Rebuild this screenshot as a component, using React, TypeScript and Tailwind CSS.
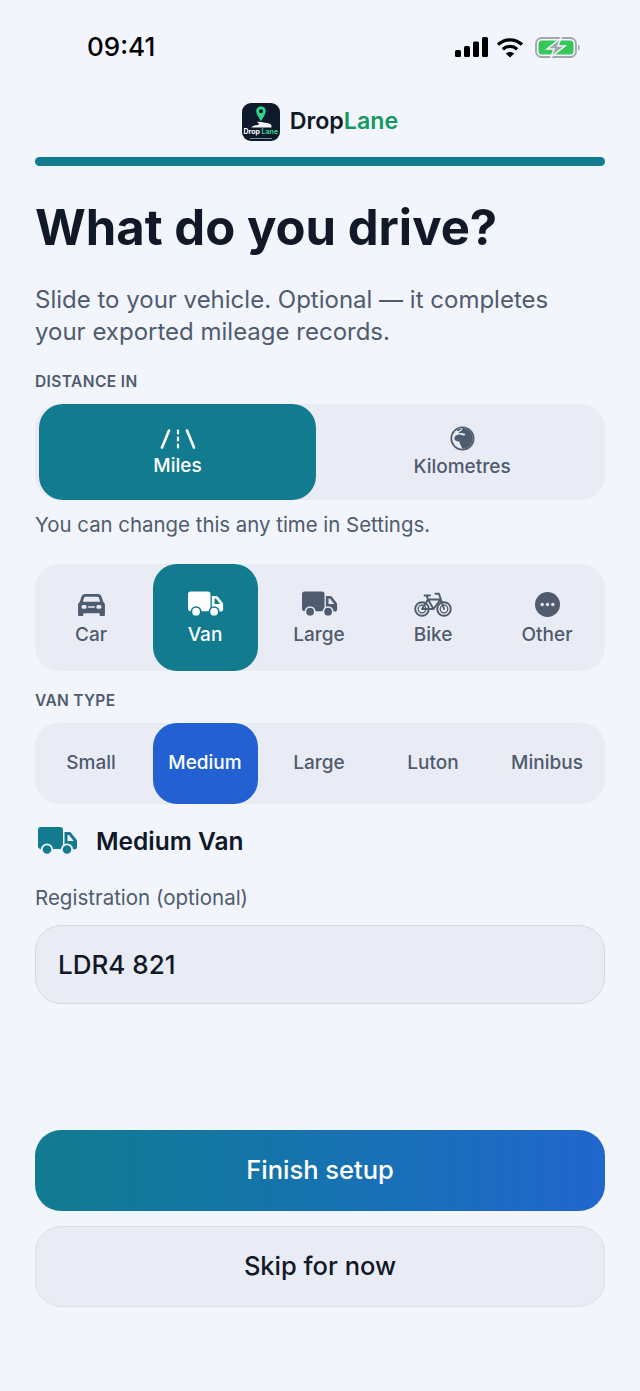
const Truck = ({ className }: { className: string }) => (
  <svg viewBox="0 0 40 28" className={className} fill="currentColor">
    <rect x="0" y="0" width="25" height="22" rx="3" />
    <path
      fillRule="evenodd"
      d="M26.500 5H31c1 0 1.800.4 2.400 1.200l5 6.300c.4.500.6 1.100.6 1.700V20c0 1.400-1 2.300-2.300 2.300H26.500Zm3 3v6h6.200L31 8Z"
    />
    <circle cx="9" cy="22.500" r="5.200" stroke="var(--ring)" strokeWidth="1.800" />
    <circle cx="29" cy="22.500" r="5.200" stroke="var(--ring)" strokeWidth="1.800" />
  </svg>
);

const RoadIcon = () => (
  <svg viewBox="0 0 36 20" className="h-[20px] w-[36px]" stroke="currentColor" strokeLinecap="round" fill="none">
    <path d="M2 18.500 9 1.500M34 18.500 27 1.500" strokeWidth="2.600" />
    <path d="M18 1.500v3M18 8.500v3M18 15.500v3" strokeWidth="2.200" />
  </svg>
);

const GlobeIcon = () => (
  <svg viewBox="0 0 26 26" className="h-[25px] w-[25px]">
    <circle cx="13" cy="13" r="12.500" fill="currentColor" />
    <circle cx="13" cy="13" r="10.800" fill="#e9ecf4" />
    <path
      fillRule="evenodd"
      d="M13 2.200a10.800 10.800 0 0 1 10.800 10.800A10.800 10.800 0 0 1 13 23.800c-.8-1.400-1.600-3.300-2.400-4.700-.4-1.200-.4-2.400-1.400-3-1.500-.3-3.400-.4-4.300-1.800-.6-1.400-.2-3.200 1-4.200 1.700-1 3.300-1.400 5.100-1.100 1.500.4 3 1 4.400.7 1-.4.300-1.500-.7-1.800-1.800-.4-3.500-.8-5.400-.2-.8-1.300 1-2.300 2.400-2.600Z"
      fill="currentColor"
    />
    <path d="M7 4.500c1.500-1 3-1.700 5-1.800-.5 1.200-2 2.300-3.700 2.700Z" fill="currentColor" />
  </svg>
);

const CarIcon = () => (
  <svg viewBox="0 0 30 24" className="h-[23px] w-[29px]" fill="currentColor">
    <path
      fillRule="evenodd"
      d="M8.500 1h13c2 0 3.400 1 4 2.800l1.700 5.200c1.200.8 1.800 2 1.800 3.300V23a1 1 0 0 1-1 1h-3.500a1 1 0 0 1-1-1v-2H6.500v2a1 1 0 0 1-1 1H2a1 1 0 0 1-1-1V12.300c0-1.300.6-2.500 1.800-3.300l1.700-5.200C5.100 2 6.500 1 8.500 1Zm.2 3c-.8 0-1.300.4-1.500 1.100L6 9h18l-1.200-3.900c-.2-.7-.7-1.100-1.500-1.100ZM6.500 12.500a2 2 0 0 0 0 4h1.500a2 2 0 0 0 0-4Zm15.500 0a2 2 0 0 0 0 4h1.500a2 2 0 0 0 0-4Zm-10 1.200a.8.8 0 0 0 0 1.600h6a.8.8 0 0 0 0-1.600Z"
    />
  </svg>
);

const BikeIcon = () => (
  <svg viewBox="0 0 38 25" className="h-[25px] w-[38px]" fill="none" stroke="currentColor" strokeLinecap="round" strokeLinejoin="round">
    <circle cx="8" cy="17" r="6.800" strokeWidth="1.900" />
    <circle cx="30" cy="17" r="6.800" strokeWidth="1.900" />
    <circle cx="8" cy="17" r="3.800" strokeWidth="1.300" />
    <circle cx="30" cy="17" r="3.800" strokeWidth="1.300" />
    <path d="M8 17 14 7.500h12.500M14 7.500 19.500 17 26.500 7.500M8 17h11.500M30 17 25 1.800h-3.500M12.500 3.500 14 7.500M10.500 3.500h5.500" strokeWidth="1.900" />
  </svg>
);

const OtherIcon = () => (
  <svg viewBox="0 0 26 26" className="h-[25px] w-[25px]">
    <circle cx="13" cy="13" r="13" fill="currentColor" />
    <circle cx="7.500" cy="13" r="1.800" fill="#e9ecf4" />
    <circle cx="13" cy="13" r="1.800" fill="#e9ecf4" />
    <circle cx="18.500" cy="13" r="1.800" fill="#e9ecf4" />
  </svg>
);

const Logo = () => (
  <div className="relative h-[38px] w-[38px] overflow-hidden rounded-[9px] bg-[#0d1a2b]">
    <svg viewBox="0 0 38 38" className="absolute inset-0 h-full w-full">
      <path
        fillRule="evenodd"
        d="M19 3.500c-2.700 0-4.800 2.100-4.800 4.700 0 3.100 4.800 9.800 4.800 9.800s4.800-6.700 4.800-9.800c0-2.600-2.100-4.700-4.800-4.700Zm0 2.800a2 2 0 1 1 0 4 2 2 0 0 1 0-4Z"
        fill="#2fd38c"
      />
      <path d="M15 19c3-1 6 .5 10 1 3 .4 4.500 1.300 4.500 3.500v1H9.500c1-2.500 6-2 7.500-3 .8-.6-.8-1.500-2-2.500Z" fill="#f4f6f8" />
    </svg>
    <div className="absolute left-0 right-0 top-[25px] whitespace-nowrap text-center text-[7px] leading-[8px] font-bold text-white">
      Drop <span className="text-[#2fd38c]">Lane</span>
    </div>
    <div className="absolute bottom-[2px] left-[8px] right-[8px] h-px bg-[#7e8a97]" />
  </div>
);

const vehicles = [
  { label: "Car", icon: <CarIcon /> },
  { label: "Van", icon: <Truck className="ml-[2px] h-[26px] w-[36px] [--ring:#127b90]" />, active: true },
  { label: "Large", icon: <Truck className="ml-[2px] h-[26px] w-[36px] [--ring:#e9ecf4]" /> },
  { label: "Bike", icon: <BikeIcon /> },
  { label: "Other", icon: <OtherIcon /> },
];

const vanTypes = ["Small", "Medium", "Large", "Luton", "Minibus"];

export default function App() {
  return (
    <div className="h-[1391px] w-[640px] overflow-hidden bg-[#f2f5fc] px-[35px] [font-family:Inter,sans-serif]">
      {/* status bar */}
      <div className="flex h-[94px] items-center justify-between pl-[52px] pr-[24px] text-black">
        <span className="text-[26px] leading-none font-medium">09:41</span>
        <div className="flex items-center">
          <svg viewBox="0 0 33 20" className="mr-[8px] h-[20px] w-[33px]" fill="currentColor">
            <rect x="0" y="13" width="6" height="7" rx="1.500" />
            <rect x="9" y="9" width="6" height="11" rx="1.500" />
            <rect x="18" y="4.500" width="6" height="15.500" rx="1.500" />
            <rect x="27" y="0" width="6" height="20" rx="1.500" />
          </svg>
          <svg viewBox="0 0 28 21" className="mr-[11px] h-[21px] w-[28px]" fill="none" stroke="currentColor" strokeWidth="3.300">
            <path d="M2 7.500c7-6.300 17-6.300 24 0" />
            <path d="M6.800 12.300c4.300-3.800 10.100-3.800 14.400 0" />
            <path d="M14 20.500 9.700 16.500c2.500-2.100 6.100-2.100 8.600 0Z" fill="currentColor" stroke="none" />
          </svg>
          <svg viewBox="0 0 46 21" className="h-[21px] w-[46px]">
            <rect x="1" y="1" width="40" height="19" rx="5.500" fill="none" stroke="#a3a7ad" strokeWidth="1.800" />
            <rect x="3.500" y="3.500" width="35" height="14" rx="3.500" fill="#35c759" />
            <path d="M43 7.500c2 .500 2.500 5.500 0 6Z" fill="#a3a7ad" />
            <path d="M26 1 12 12h7l-3 8 14-11h-7Z" fill="#a3a7ad" stroke="#f2f5fc" strokeWidth="1.500" />
          </svg>
        </div>
      </div>

      {/* brand */}
      <div className="mt-[8px] flex h-[39px] items-center justify-center gap-[10px]">
        <Logo />
        <span className="text-[23.200px] leading-none font-semibold text-[#111827]">
          Drop<span className="text-[#16975f]">Lane</span>
        </span>
      </div>

      <div className="mt-[16px] h-[9px] rounded-full bg-[#127b90]" />

      <h1 className="mt-[30px] text-[49px] leading-[64px] font-bold text-[#111827]">What do you drive?</h1>
      <p className="mt-[24px] text-[24px] leading-[32px] text-[#4f5b6e]">
        Slide to your vehicle. Optional — it completes your exported mileage records.
      </p>

      <div className="mt-[24px] text-[15.500px] leading-[20px] font-semibold tracking-[0.4px] text-[#4f5b6e]">DISTANCE IN</div>

      <div className="mt-[12px] flex h-[96px] rounded-[24px] bg-[#e9ecf4] pl-[4px]">
        <div className="flex w-[277px] flex-col items-center justify-center gap-[6px] rounded-[24px] bg-[#127b90] pt-[2px] text-white">
          <RoadIcon />
          <span className="text-[19px] leading-[22px] font-medium">Miles</span>
        </div>
        <div className="flex flex-1 flex-col items-center justify-center gap-[5px] pl-[3px] text-[#4f5b6e]">
          <GlobeIcon />
          <span className="text-[19px] leading-[22px] font-medium">Kilometres</span>
        </div>
      </div>
      <p className="mt-[12px] text-[20.400px] leading-[26px] text-[#4f5b6e]">You can change this any time in Settings.</p>

      <div className="mt-[26px] grid h-[107px] grid-cols-5 rounded-[24px] bg-[#e9ecf4]">
        {vehicles.map((v) => (
          <div key={v.label} className="flex justify-center pr-[2px]">
            <div
              className={`flex h-full w-[105px] flex-col items-center justify-center rounded-[24px] ${
                v.active ? "bg-[#127b90] text-white" : "text-[#4f5b6e]"
              }`}
            >
              <div className="flex h-[32px] items-center justify-center">{v.icon}</div>
              <span className="mt-[3px] text-[19px] leading-[24px] font-medium">{v.label}</span>
            </div>
          </div>
        ))}
      </div>

      <div className="mt-[20px] text-[15.500px] leading-[20px] font-semibold tracking-[0.3px] text-[#4f5b6e]">VAN TYPE</div>

      <div className="mt-[12px] grid h-[81px] grid-cols-5 rounded-[24px] bg-[#e9ecf4]">
        {vanTypes.map((t) => (
          <div key={t} className="flex justify-center pr-[2px]">
            <div
              className={`flex h-full w-[105px] items-center justify-center rounded-[24px] text-[19px] font-medium ${
                t === "Medium" ? "bg-[#2361d3] text-white" : "text-[#4f5b6e]"
              }`}
            >
              {t}
            </div>
          </div>
        ))}
      </div>

      <div className="mt-[19px] flex h-[36px] items-center gap-[18px] pl-[3px]">
        <Truck className="h-[28px] w-[40px] text-[#127b90] [--ring:#f2f5fc]" />
        <span className="text-[24.500px] leading-none font-semibold text-[#111827]">Medium Van</span>
      </div>

      <div className="mt-[24px] text-[20.500px] leading-[30px] text-[#4f5b6e]">Registration (optional)</div>

      <div className="mt-[12px] flex h-[79px] items-center rounded-[26px] border border-[#d6dae2] bg-[#e9ecf4] px-[22px] text-[26px] font-medium text-[#111827]">
        LDR4 821
      </div>

      <button className="mt-[126px] block h-[81px] w-full rounded-[26px] bg-gradient-to-r from-[#127b90] to-[#2166ce] text-[25.500px] font-medium text-white">
        Finish setup
      </button>
      <button className="mt-[15px] block h-[81px] w-full rounded-[26px] border border-[#dcdfe7] bg-[#e9ecf4] text-[25.500px] font-medium text-[#111827]">
        Skip for now
      </button>
    </div>
  );
}
